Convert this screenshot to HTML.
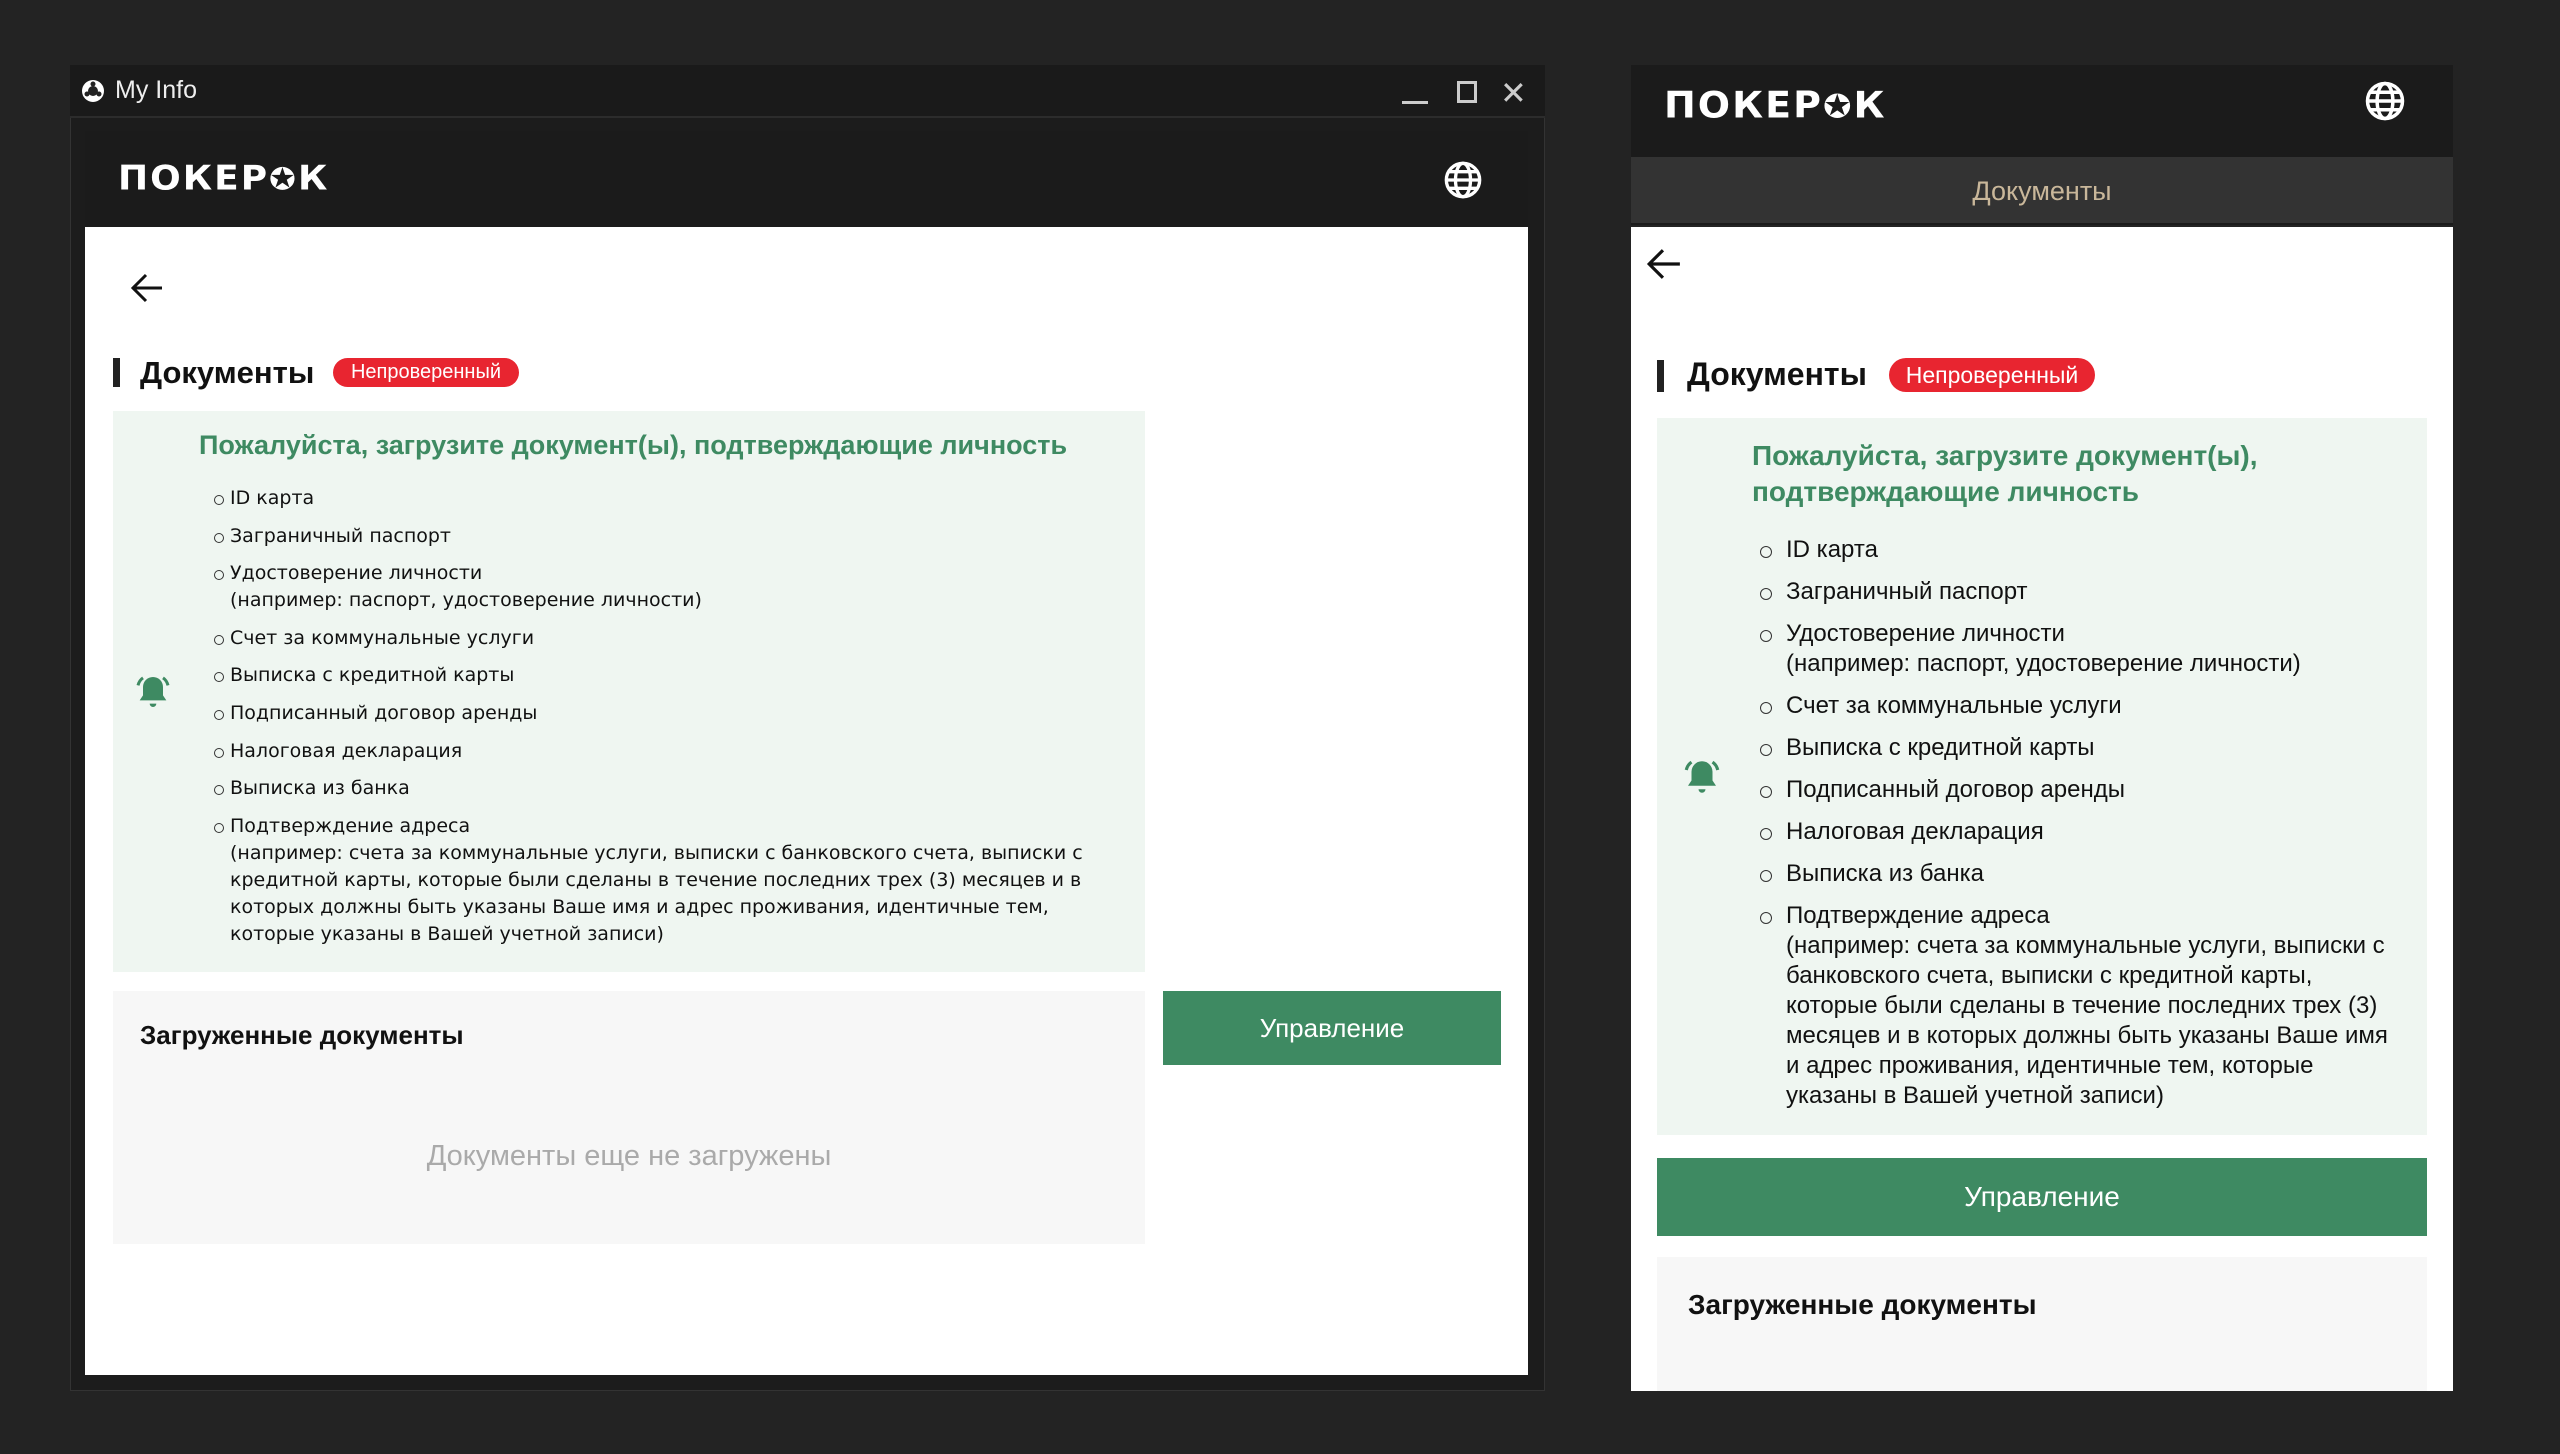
<!DOCTYPE html>
<html><head><meta charset="utf-8"><style>
*{margin:0;padding:0;box-sizing:border-box}
body{width:2560px;height:1454px;background:#232323;position:relative;overflow:hidden;font-family:"Liberation Sans",sans-serif}
.abs{position:absolute}
.logo{color:#fff;font-weight:bold;letter-spacing:2px;font-family:"DejaVu Sans",sans-serif;transform:scaleY(0.95)}
ul{list-style:none}
li{position:relative}
li:before{content:"";position:absolute;border:1.5px solid #333;border-radius:50%}
.l li{font-family:"DejaVu Sans",sans-serif;font-size:19px;color:#111;line-height:27px;margin-bottom:10.6px;padding-left:0}
.l li:before{width:8px;height:8px;left:-16px;top:10px}
.r li{font-size:24px;color:#111;line-height:30px;margin-bottom:12px}
.r li:before{width:10px;height:10px;left:-26px;top:11px}
</style></head><body>
<!-- left window -->
<div class="abs" style="left:70px;top:65px;width:1475px;height:1326px;background:#1c1c1c;border:1px solid #333"></div>
<div class="abs" style="left:70px;top:65px;width:1475px;height:53px;background:#1a1a1a;border-bottom:2px solid #2c2c2c"></div>
<svg class="abs" style="left:80px;top:78px" width="26" height="26" viewBox="0 0 26 26"><circle cx="13" cy="13" r="11" fill="#fff"/><circle cx="13" cy="13" r="5" fill="#222"/><circle cx="13" cy="6" r="2.5" fill="#222"/><circle cx="7" cy="16" r="2.5" fill="#222"/><circle cx="19" cy="16" r="2.5" fill="#222"/></svg>
<div class="abs" style="left:115px;top:76px;color:#eee;font-size:25px">My Info</div>
<div class="abs" style="left:1402px;top:101px;width:26px;height:3px;background:#ccc"></div>
<div class="abs" style="left:1457px;top:81px;width:20px;height:22px;border:3px solid #ccc"></div>
<div class="abs" style="left:1500px;top:74px;color:#ccc;font-size:32px">✕</div>
<div class="abs" style="left:85px;top:131px;width:1443px;height:96px;background:#1b1b1b"></div>
<div class="abs logo" style="left:118px;top:158px;font-size:36px">ПОКЕР<span style="font-size:32px">✪</span>К</div>
<svg class="abs" style="left:1443px;top:160px" width="40" height="40" viewBox="0 0 24 24" fill="none" stroke="#fff" stroke-width="2"><circle cx="12" cy="12" r="10"/><ellipse cx="12" cy="12" rx="4.5" ry="10"/><path d="M2 12h20M3.5 7h17M3.5 17h17"/></svg>
<div class="abs" style="left:85px;top:227px;width:1443px;height:1148px;background:#fff"></div>
<svg class="abs" style="left:130px;top:272px" width="34" height="32" viewBox="0 0 34 32" fill="none" stroke="#111" stroke-width="3"><path d="M32 16H4M16 3L3 16l13 13"/></svg>
<div class="abs" style="left:113px;top:358px;width:7px;height:29px;background:#222"></div>
<div class="abs" style="left:140px;top:355px;font-size:31px;font-weight:bold;color:#111">Документы</div>
<div class="abs" style="left:333px;top:358px;width:186px;height:29px;border-radius:15px;background:#e82530;color:#fff;font-size:20px;text-align:center;line-height:29px">Непроверенный</div>
<div class="abs" style="left:113px;top:411px;width:1032px;height:561px;background:#eff6f1"></div>
<svg class="abs" style="left:133px;top:672px" width="40" height="40" viewBox="0 0 24 24" fill="#3e8a62"><path d="M12 3a6 6 0 0 0-6 6v5l-2 3h16l-2-3V9a6 6 0 0 0-6-6zM10 19h4a2 2 0 0 1-4 0z"/><path d="M3 8c.5-2 1.5-3.5 3-4.5M21 8c-.5-2-1.5-3.5-3-4.5" stroke="#3e8a62" stroke-width="1.8" fill="none"/></svg>
<div class="abs" style="left:199px;top:430px;font-size:27px;font-weight:bold;color:#3e8a62">Пожалуйста, загрузите документ(ы), подтверждающие личность</div>
<ul class="abs l" style="left:230px;top:485px;width:900px">
<li>ID карта</li><li>Заграничный паспорт</li><li>Удостоверение личности<br>(например: паспорт, удостоверение личности)</li><li>Счет за коммунальные услуги</li><li>Выписка с кредитной карты</li><li>Подписанный договор аренды</li><li>Налоговая декларация</li><li>Выписка из банка</li><li>Подтверждение адреса<br>(например: счета за коммунальные услуги, выписки с банковского счета, выписки с кредитной карты, которые были сделаны в течение последних трех (3) месяцев и в которых должны быть указаны Ваше имя и адрес проживания, идентичные тем, которые указаны в Вашей учетной записи)</li>
</ul>
<div class="abs" style="left:113px;top:991px;width:1032px;height:253px;background:#f7f7f7"></div>
<div class="abs" style="left:140px;top:1020px;font-size:26px;font-weight:bold;color:#111">Загруженные документы</div>
<div class="abs" style="left:113px;top:1140px;width:1032px;text-align:center;font-size:29px;color:#aaa">Документы еще не загружены</div>
<div class="abs" style="left:1163px;top:991px;width:338px;height:74px;background:#3e8a62;color:#fff;font-size:26px;text-align:center;line-height:74px">Управление</div>

<!-- right panel -->
<div class="abs" style="left:1631px;top:65px;width:822px;height:92px;background:#1b1b1b"></div>
<div class="abs logo" style="left:1664px;top:83px;font-size:38px">ПОКЕР<span style="font-size:34px">✪</span>К</div>
<svg class="abs" style="left:2364px;top:80px" width="42" height="42" viewBox="0 0 24 24" fill="none" stroke="#fff" stroke-width="2"><circle cx="12" cy="12" r="10"/><ellipse cx="12" cy="12" rx="4.5" ry="10"/><path d="M2 12h20M3.5 7h17M3.5 17h17"/></svg>
<div class="abs" style="left:1631px;top:157px;width:822px;height:68px;background:#333;color:#c9b79a;font-size:27px;text-align:center;line-height:68px;border-bottom:2px solid #1b1b1b">Документы</div>
<div class="abs" style="left:1631px;top:227px;width:822px;height:1164px;background:#fff"></div>
<svg class="abs" style="left:1646px;top:247px" width="36" height="34" viewBox="0 0 34 32" fill="none" stroke="#111" stroke-width="3"><path d="M32 16H4M16 3L3 16l13 13"/></svg>
<div class="abs" style="left:1657px;top:360px;width:7px;height:32px;background:#222"></div>
<div class="abs" style="left:1687px;top:356px;font-size:32px;font-weight:bold;color:#111">Документы</div>
<div class="abs" style="left:1889px;top:358px;width:206px;height:34px;border-radius:17px;background:#e82530;color:#fff;font-size:23px;text-align:center;line-height:34px">Непроверенный</div>
<div class="abs" style="left:1657px;top:418px;width:770px;height:717px;background:#eff6f1"></div>
<svg class="abs" style="left:1681px;top:756px" width="42" height="42" viewBox="0 0 24 24" fill="#3e8a62"><path d="M12 3a6 6 0 0 0-6 6v5l-2 3h16l-2-3V9a6 6 0 0 0-6-6zM10 19h4a2 2 0 0 1-4 0z"/><path d="M3 8c.5-2 1.5-3.5 3-4.5M21 8c-.5-2-1.5-3.5-3-4.5" stroke="#3e8a62" stroke-width="1.8" fill="none"/></svg>
<div class="abs" style="left:1752px;top:438px;width:640px;font-size:28px;line-height:36px;font-weight:bold;color:#3e8a62">Пожалуйста, загрузите документ(ы), подтверждающие личность</div>
<ul class="abs r" style="left:1786px;top:535px;width:605px">
<li>ID карта</li><li>Заграничный паспорт</li><li>Удостоверение личности<br>(например: паспорт, удостоверение личности)</li><li>Счет за коммунальные услуги</li><li>Выписка с кредитной карты</li><li>Подписанный договор аренды</li><li>Налоговая декларация</li><li>Выписка из банка</li><li>Подтверждение адреса<br>(например: счета за коммунальные услуги, выписки с банковского счета, выписки с кредитной карты, которые были сделаны в течение последних трех (3) месяцев и в которых должны быть указаны Ваше имя и адрес проживания, идентичные тем, которые указаны в Вашей учетной записи)</li>
</ul>
<div class="abs" style="left:1657px;top:1158px;width:770px;height:78px;background:#3e8a62;color:#fff;font-size:28px;text-align:center;line-height:78px">Управление</div>
<div class="abs" style="left:1657px;top:1257px;width:770px;height:134px;background:#f7f7f7"></div>
<div class="abs" style="left:1688px;top:1289px;font-size:28px;font-weight:bold;color:#111">Загруженные документы</div>
</body></html>
